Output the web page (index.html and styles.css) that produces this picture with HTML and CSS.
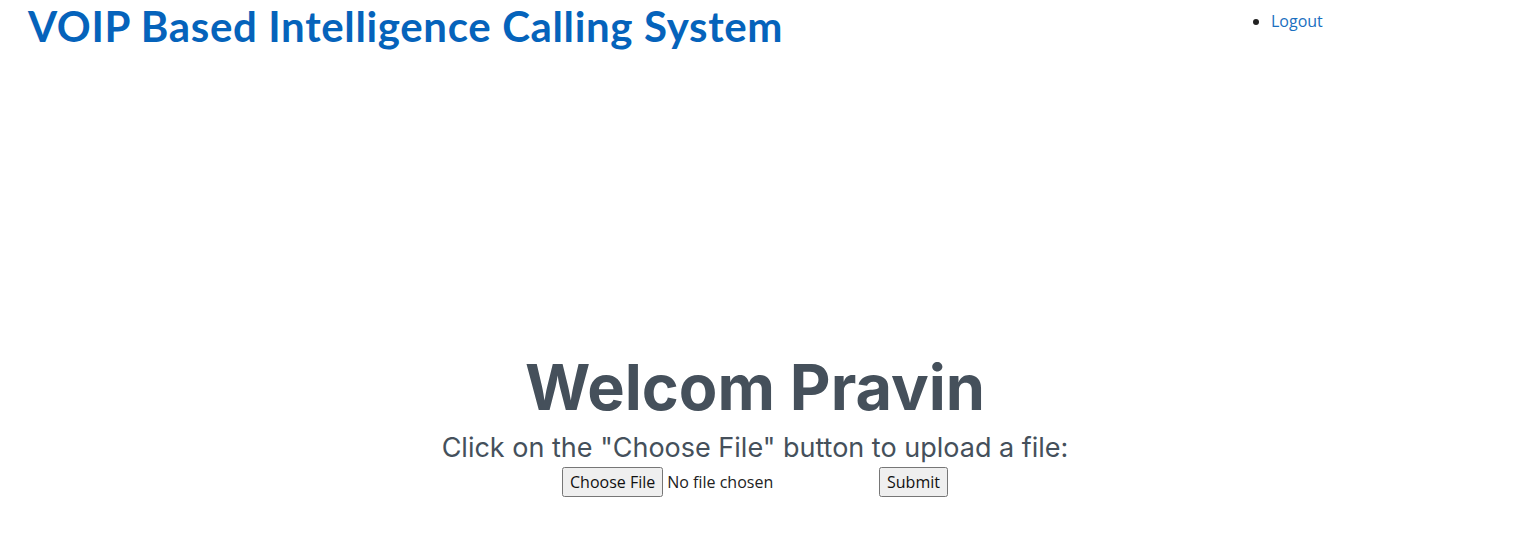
FILE: index.html
```html
<!DOCTYPE html>
<html>
<head>
<meta charset="utf-8">
<title>VOIP Based Intelligence Calling System</title>
<link rel="stylesheet" href="styles.css">
</head>
<body>
<header class="header">
  <h1 class="logo">VOIP Based Intelligence Calling System</h1>
  <ul class="nav">
    <li><a href="#" class="nav-link">Logout</a></li>
  </ul>
</header>
<main class="hero">
  <h2 class="welcome">Welcom Pravin</h2>
  <p class="hint">Click on the "Choose File" button to upload a file:</p>
  <form class="upload">
    <input type="file" class="file-input">
    <input type="submit" value="Submit" class="submit">
  </form>
</main>
</body>
</html>
```

FILE: styles.css
```css
html, body {
  margin: 0;
  padding: 0;
  background: #fff;
}
body {
  font-family: "Open Sans", "Liberation Sans", sans-serif;
  height: 553px;
  overflow: hidden;
}
.header {
  display: flex;
  justify-content: space-between;
  align-items: flex-start;
  padding: 0 0 0 28px;
}
.logo {
  margin: 0;
  font-family: Lato, "Open Sans", sans-serif;
  font-weight: 700;
  font-size: 42px;
  line-height: 52px;
  color: #0563bb;
  letter-spacing: 0.65px;
}
.nav {
  margin: 9px 181px 0 0;
  padding: 0 0 0 40px;
  width: 84px;
  font-size: 16px;
  line-height: 24px;
  color: #222;
}
.nav-link {
  color: #1a6fc0;
  text-decoration: none;
}
.hero {
  width: 1510px;
  display: flex;
  flex-direction: column;
  align-items: center;
  padding-top: 299px;
}
.welcome {
  margin: 0;
  font-family: Inter, "Open Sans", sans-serif;
  font-weight: 700;
  font-size: 63px;
  line-height: 72px;
  color: #45505b;
}
.hint {
  margin: 7px 0 0;
  font-family: Inter, "Open Sans", sans-serif;
  font-weight: 400;
  font-size: 27px;
  line-height: 36px;
  color: #45505b;
}
.upload {
  display: flex;
  align-items: center;
  margin-top: 1px;
}
.file-input {
  font-family: "Open Sans", sans-serif;
  font-size: 16px;
  width: 317px;
  color: #222;
}
.file-input::file-selector-button {
  font-family: "Open Sans", sans-serif;
  font-size: 16px;
  padding: 2px 6px;
  margin-right: 4px;
  color: #111;
}
.submit {
  font-family: "Open Sans", sans-serif;
  font-size: 16px;
  padding: 2px 6px;
  color: #111;
}
```
